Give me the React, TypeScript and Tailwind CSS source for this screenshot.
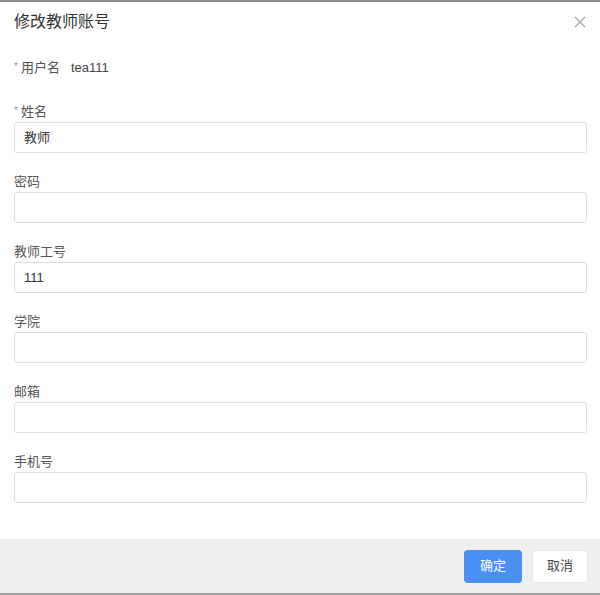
import React from "react";

const fields: { label: string; value: string; required?: boolean }[] = [
  { label: "姓名", value: "教师", required: true },
  { label: "密码", value: "" },
  { label: "教师工号", value: "111" },
  { label: "学院", value: "" },
  { label: "邮箱", value: "" },
  { label: "手机号", value: "" },
];

export default function App() {
  return (
    <div
      className="h-[595px] w-[600px] flex flex-col bg-white border-t-2 border-b-2 border-t-[#8c8c8c] border-b-[#a0a0a0] text-[#555]"
      style={{ fontFamily: '"Liberation Sans", "Noto Sans CJK SC", sans-serif' }}
    >
      <div className="h-[40px] flex items-center justify-between pl-[14px] pr-[14px]">
        <span className="text-[16px] text-[#333] leading-[22px]">修改教师账号</span>
        <svg width="12" height="12" viewBox="0 0 12 12">
          <path d="M1 1 L11 11 M11 1 L1 11" stroke="#a6a6a6" strokeWidth="1.3" fill="none" />
        </svg>
      </div>
      <div className="flex-1 px-[14px]">
        <div className="mt-[16px] h-[20px] flex items-center text-[13px]">
          <span className="text-[#999] text-[10px] mr-[3px] -mt-[4px]">*</span>
          <span className="text-[#555]">用户名</span>
          <span className="ml-[11px] text-[#444]">tea111</span>
        </div>
        <div className="mt-[24px] flex flex-col">
          {fields.map((f) => (
            <div key={f.label} className="mb-[19px]">
              <div className="h-[20px] flex items-center text-[13px]">
                {f.required && (
                  <span className="text-[#999] text-[10px] mr-[3px] -mt-[4px]">*</span>
                )}
                <span>{f.label}</span>
              </div>
              <div className="h-[31px] w-[573px] border border-[#dfdfdf] rounded-[3px] flex items-center px-[9px] text-[13px] text-[#333]">
                {f.value}
              </div>
            </div>
          ))}
        </div>
      </div>
      <div className="h-[54px] bg-[#efefef] flex items-center justify-end pr-[12px] gap-[10px]">
        <button className="w-[58px] h-[33px] rounded-[4px] bg-[#4990f2] text-white text-[13px]">确定</button>
        <button className="w-[56px] h-[33px] rounded-[4px] bg-white border border-[#e6e6e6] text-[#444] text-[13px]">取消</button>
      </div>
    </div>
  );
}
